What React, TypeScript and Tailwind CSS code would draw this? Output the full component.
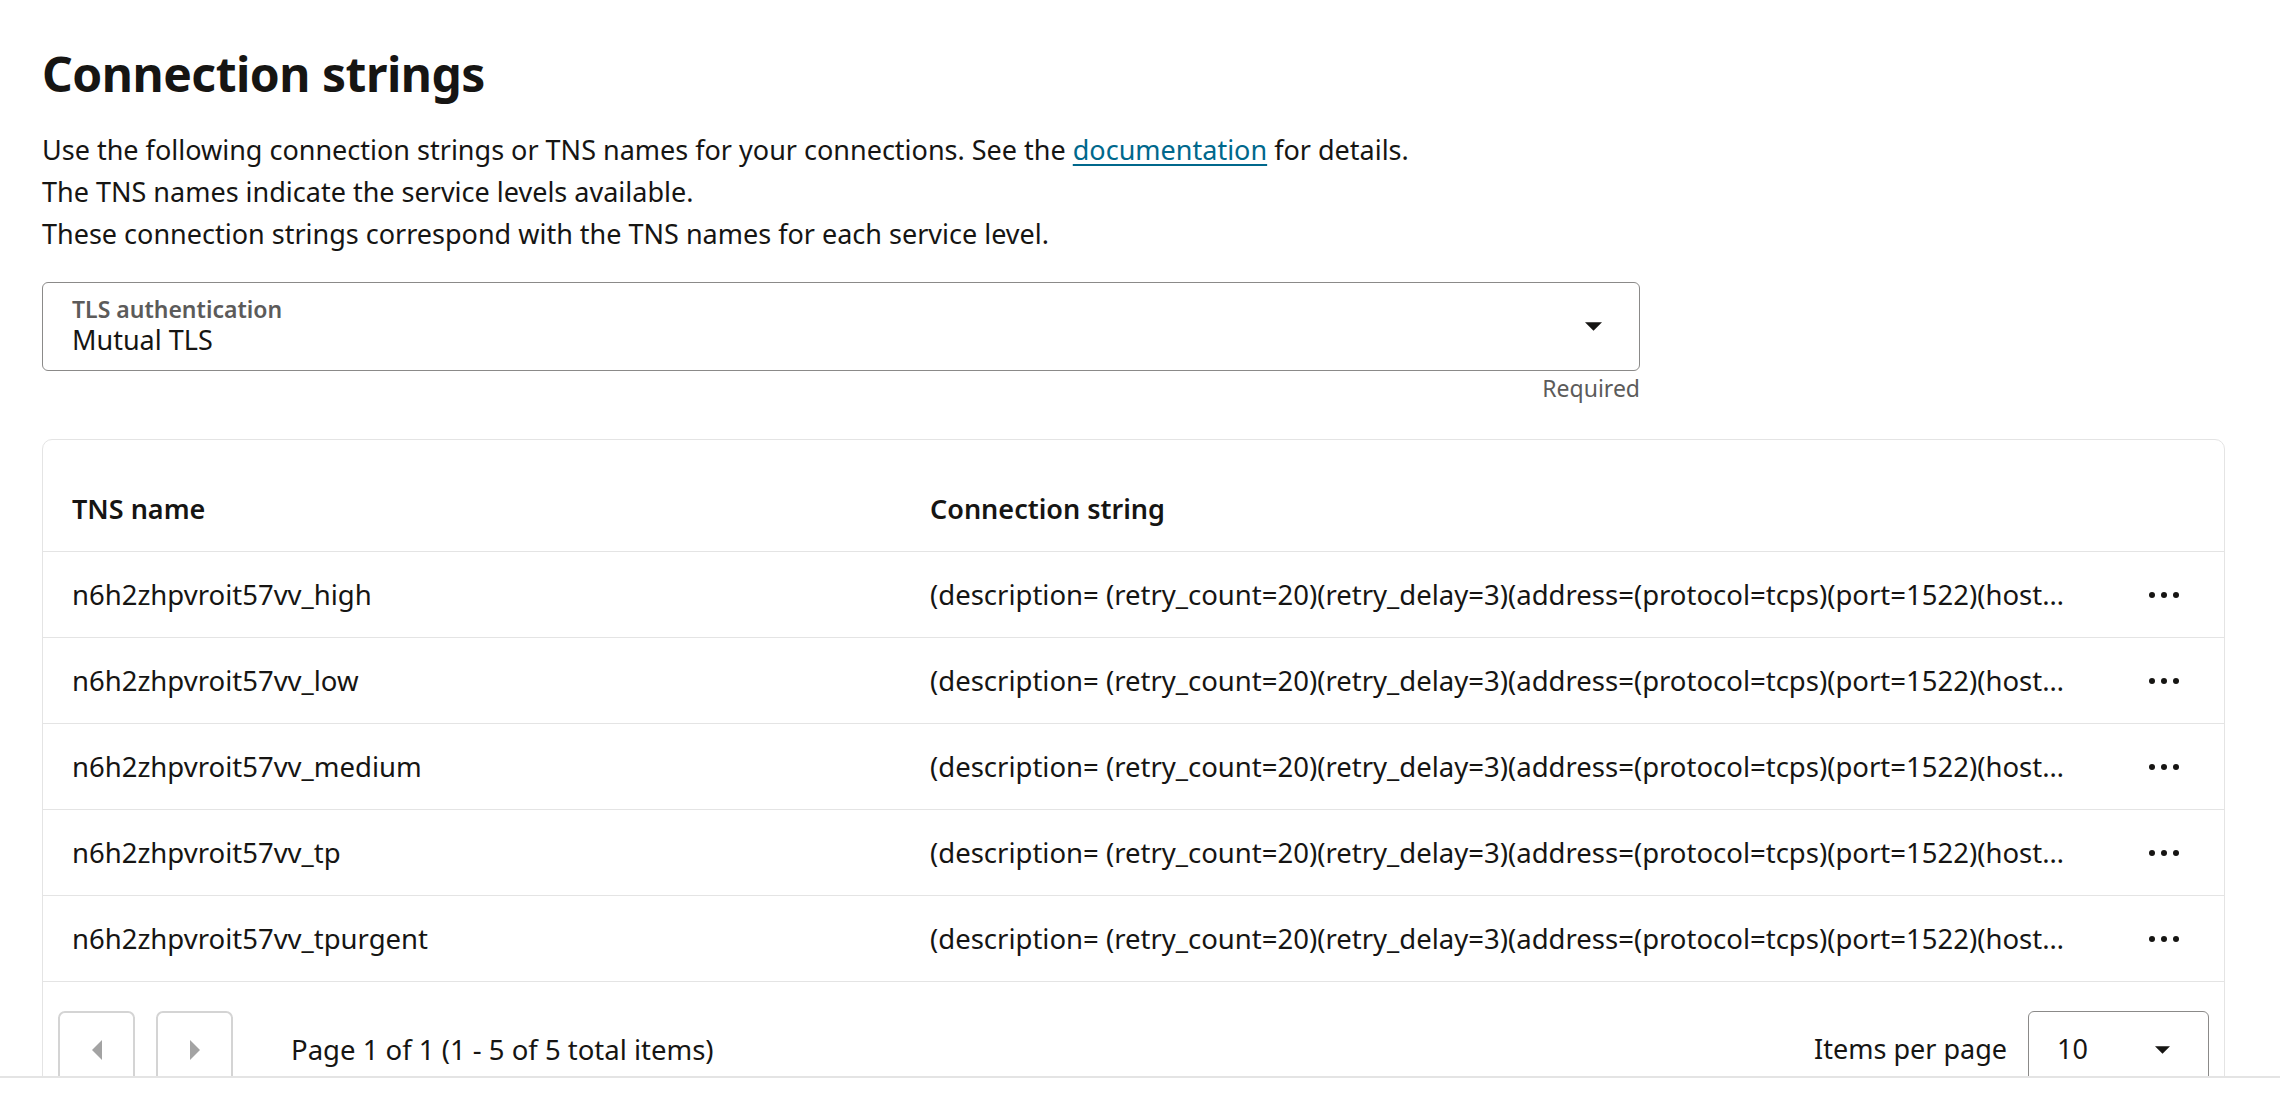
const rows = [
  "n6h2zhpvroit57vv_high",
  "n6h2zhpvroit57vv_low",
  "n6h2zhpvroit57vv_medium",
  "n6h2zhpvroit57vv_tp",
  "n6h2zhpvroit57vv_tpurgent",
];

const conn =
  "(description= (retry_count=20)(retry_delay=3)(address=(protocol=tcps)(port=1522)(host=adb.us-ashburn-1.oraclecloud.com))(connect_data=(service_name=g1b2c3d4e5f6g7h_n6h2zhpvroit57vv_high.adb.oraclecloud.com))(security=(ssl_server_dn_match=yes)))";

function Caret({ className }: { className?: string }) {
  return (
    <svg viewBox="0 0 16 8" className={className}>
      <path d="M0 0 L16 0 L8 8 Z" fill="currentColor" />
    </svg>
  );
}

function Kebab() {
  return (
    <button className="flex items-center gap-[6px] p-2">
      <span className="w-[6px] h-[6px] rounded-full bg-[#161513]" />
      <span className="w-[6px] h-[6px] rounded-full bg-[#161513]" />
      <span className="w-[6px] h-[6px] rounded-full bg-[#161513]" />
    </button>
  );
}

export default function App() {
  return (
    <div className="h-[1102px] w-[2280px] flex flex-col bg-white text-[#161513] font-['Noto_Sans',sans-serif] overflow-hidden">
      <div className="h-[1076px] shrink-0 overflow-hidden pl-[42px] pr-[55px] pt-[44px]">
        <h1 className="text-[48px] leading-[60px] font-bold tracking-[-0.5px]">Connection strings</h1>

        <div className="mt-[25px] text-[27px] leading-[42px]">
          <p>
            Use the following connection strings or TNS names for your connections. See the{" "}
            <a href="#" className="text-[#00688c] underline underline-offset-[4px]">
              documentation
            </a>{" "}
            for details.
          </p>
          <p>The TNS names indicate the service levels available.</p>
          <p>These connection strings correspond with the TNS names for each service level.</p>
        </div>

        <div className="w-[1598px] mt-[27px]">
          <div className="h-[89px] border border-[#8b8a89] rounded-[6px] flex items-center pl-[29px] pr-[37px]">
            <div className="flex-1 flex flex-col">
              <span className="text-[23px] leading-[26px] font-semibold text-[#5c5b5a]">TLS authentication</span>
              <span className="text-[27px] leading-[36px]">Mutual TLS</span>
            </div>
            <Caret className="w-[17px] h-[9px] text-[#161513]" />
          </div>
          <div className="mt-[2px] text-right text-[23px] leading-[30px] text-[#5c5b5a]">Required</div>
        </div>

        <div className="mt-[36px] border border-[#e4e4e4] rounded-t-[10px] pt-[27px]">
          <div className="grid grid-cols-[858px_1fr_120px] h-[85px] items-center border-b border-[#e4e4e4] text-[27px] font-semibold">
            <div className="pl-[29px]">TNS name</div>
            <div className="pl-[29px]">Connection string</div>
            <div />
          </div>
          {rows.map((r) => (
            <div
              key={r}
              className="grid grid-cols-[858px_1fr_120px] h-[86px] items-center border-b border-[#e4e4e4] text-[27.5px]"
            >
              <div className="pl-[29px] truncate">{r}</div>
              <div className="pl-[29px] pr-[29px] truncate">{conn}</div>
              <div className="flex justify-center">
                <Kebab />
              </div>
            </div>
          ))}

          <div className="flex items-start pt-[29px] pb-[40px] pl-[15px] pr-[15px]">
            <button className="w-[77px] h-[77px] border-2 border-[#d4d4d4] rounded-[7px] flex items-center justify-center">
              <svg viewBox="0 0 10 20" className="w-[10px] h-[20px] text-[#a3a3a3]">
                <path d="M10 0 L10 20 L0 10 Z" fill="currentColor" />
              </svg>
            </button>
            <button className="ml-[21px] w-[77px] h-[77px] border-2 border-[#d4d4d4] rounded-[7px] flex items-center justify-center">
              <svg viewBox="0 0 10 20" className="w-[10px] h-[20px] text-[#a3a3a3]">
                <path d="M0 0 L10 10 L0 20 Z" fill="currentColor" />
              </svg>
            </button>
            <div className="ml-[58px] h-[77px] flex items-center text-[27.5px]">
              Page 1 of 1 (1 - 5 of 5 total items)
            </div>
            <div className="flex-1" />
            <div className="h-[77px] flex items-center text-[27px]">Items per page</div>
            <div className="ml-[21px] w-[181px] h-[77px] border border-[#8b8a89] rounded-[6px] flex items-center pl-[28px] pr-[38px] text-[27px]">
              <span className="flex-1">10</span>
              <Caret className="w-[15px] h-[8px]" />
            </div>
          </div>
        </div>
      </div>
      <div className="flex-1 border-t-2 border-[#e4e4e4] bg-white" />
    </div>
  );
}
